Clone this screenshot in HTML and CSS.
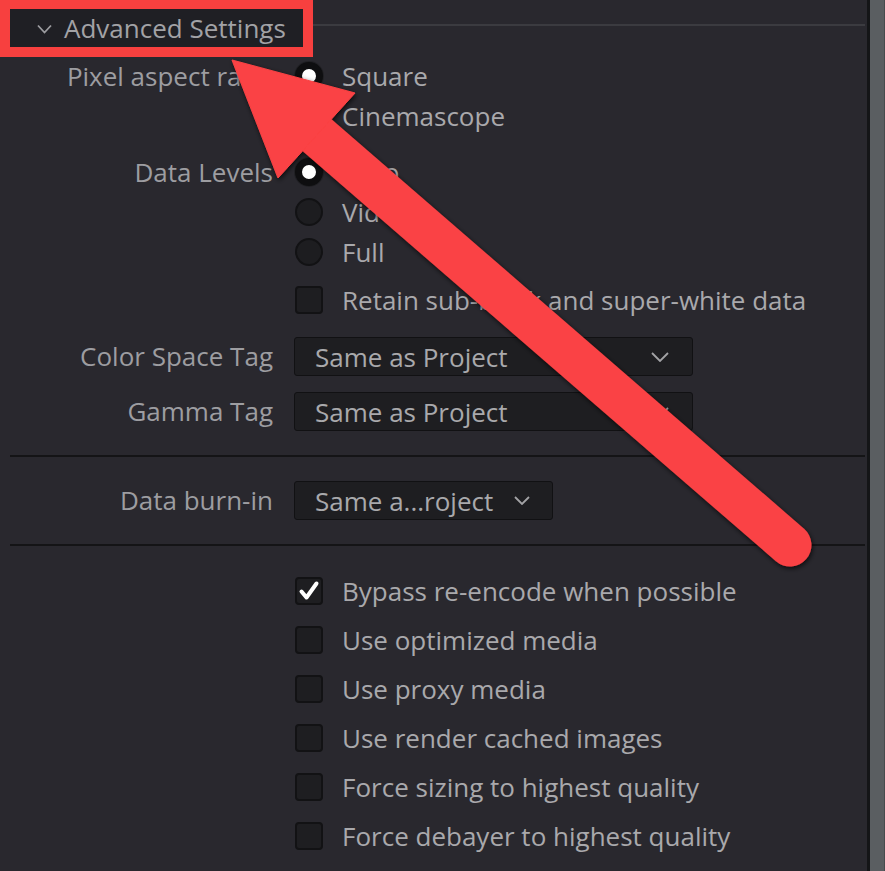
FILE: index.html
```html
<!DOCTYPE html>
<html lang="en">

<head>
    <meta charset="UTF-8">
    <meta name="viewport" content="width=device-width, initial-scale=1.0">
    <title>Advanced Settings</title>
    <link rel="stylesheet" href="styles.css">
</head>

<body>
    <div class="screen">
        <main class="panel">
            <!-- Section header -->
            <div class="head">
                <div class="head-box">
                    <svg class="head-chev" width="15" height="10" viewBox="0 0 15 10">
                        <polyline points="1,1.5 7.5,8.5 14,1.5" fill="none" stroke="#9c9ca0" stroke-width="1.8" />
                    </svg>
                    <span>Advanced Settings</span>
                </div>
                <div class="head-rule"></div>
            </div>

            <div class="field f-aspect">
                <div class="label">Pixel aspect ratio</div>
                <div class="opts">
                    <div class="opt"><span class="radio on"></span>Square</div>
                    <div class="opt"><span class="radio"></span>Cinemascope</div>
                </div>
            </div>

            <div class="field f-levels">
                <div class="label">Data Levels</div>
                <div class="opts">
                    <div class="opt"><span class="radio on"></span>Auto</div>
                    <div class="opt"><span class="radio"></span>Video</div>
                    <div class="opt"><span class="radio"></span>Full</div>
                    <div class="opt check-row retain"><span class="box"></span>Retain sub-black and super-white data</div>
                </div>
            </div>

            <div class="field f-color">
                <div class="label">Color Space Tag</div>
                <div class="select wide">
                    <span>Same as Project</span>
                    <svg width="18" height="10" viewBox="0 0 18 10"><polyline points="1,1 9,9 17,1" fill="none" stroke="#a3a3a6" stroke-width="1.8" /></svg>
                </div>
            </div>

            <div class="field f-gamma">
                <div class="label">Gamma Tag</div>
                <div class="select wide">
                    <span>Same as Project</span>
                    <svg width="18" height="10" viewBox="0 0 18 10"><polyline points="1,1 9,9 17,1" fill="none" stroke="#a3a3a6" stroke-width="1.8" /></svg>
                </div>
            </div>

            <div class="rule"></div>

            <div class="field f-burn">
                <div class="label">Data burn-in</div>
                <div class="select narrow">
                    <span>Same a...roject</span>
                    <svg width="16" height="9" viewBox="0 0 16 9"><polyline points="1,1 8,8 15,1" fill="none" stroke="#a3a3a6" stroke-width="1.8" /></svg>
                </div>
            </div>

            <div class="rule"></div>

            <div class="checks">
                <div class="opt check-row"><span class="box on">
                    <svg width="22" height="22" viewBox="0 0 22 22"><path d="M3.5 11.5 L8.5 17.5 L18.5 3.5" fill="none" stroke="#fff" stroke-width="4" stroke-linecap="round" stroke-linejoin="round" /></svg>
                </span>Bypass re-encode when possible</div>
                <div class="opt check-row"><span class="box"></span>Use optimized media</div>
                <div class="opt check-row"><span class="box"></span>Use proxy media</div>
                <div class="opt check-row"><span class="box"></span>Use render cached images</div>
                <div class="opt check-row"><span class="box"></span>Force sizing to highest quality</div>
                <div class="opt check-row"><span class="box"></span>Force debayer to highest quality</div>
            </div>
        </main>

        <!-- Scrollbar track -->
        <div class="scrollbar"></div>
    </div>

    <!-- Annotation arrow -->
    <svg class="annot" width="885" height="871" viewBox="0 0 885 871">
        <defs>
            <filter id="shade" x="-10%" y="-10%" width="120%" height="120%">
                <feDropShadow dx="1" dy="2" stdDeviation="2.5" flood-color="#000" flood-opacity="0.7" />
            </filter>
        </defs>
        <g filter="url(#shade)" fill="#fa4244" stroke="#fa4244">
            <line x1="318" y1="136" x2="790" y2="545" stroke-width="43" stroke-linecap="round" />
            <polygon points="232,60 278,178 355,93" stroke-width="1" stroke-linejoin="round" />
        </g>
    </svg>
</body>

</html>
```

FILE: styles.css
```css
body {
    margin: 0;
    padding: 0;
    background-color: #29282e;
    font-family: 'Open Sans', 'Noto Sans', sans-serif;
    font-size: 26px;
    color: #9d9da1;
    overflow: hidden;
}

.screen {
    display: flex;
    width: 885px;
    height: 871px;
}

.panel {
    width: 867px;
    flex: none;
}

.scrollbar {
    flex: 1;
    border-left: 3px solid #141517;
    border-right: 1px solid #474b4d;
    background-color: #5a5e61;
}

/* Header */

.head {
    display: flex;
    height: 57px;
}

.head-box {
    box-sizing: border-box;
    width: 313px;
    height: 57px;
    border: 10px solid #f7403f;
    border-top-width: 9px;
    background-color: #1f1f24;
    display: flex;
    align-items: center;
    padding-left: 27px;
    color: #a2a2a6;
}

.head-chev {
    margin-right: 12px;
    margin-top: 2px;
}

.head-rule {
    flex: 1;
    height: 2px;
    margin-top: 24px;
    margin-right: 2px;
    background-color: #3b3b40;
}

/* Fields */

.field {
    display: grid;
    grid-template-columns: 273px 1fr;
    column-gap: 21px;
    align-items: start;
}

.label {
    text-align: right;
    height: 40px;
    line-height: 40px;
    white-space: nowrap;
}

.f-aspect {
    margin-top: -1px;
}

.f-levels {
    margin-top: 16px;
}

.f-color {
    margin-top: 13px;
}

.f-gamma {
    margin-top: 16px;
}

.f-color .label,
.f-gamma .label,
.f-burn .label {
    height: 39px;
    line-height: 39px;
}

.f-burn {
    margin-top: 24px;
}

.opt {
    display: flex;
    align-items: center;
    height: 40px;
    color: #a9a9ac;
    white-space: nowrap;
}

.radio {
    box-sizing: border-box;
    width: 28px;
    height: 28px;
    margin-left: 1px;
    margin-right: 19px;
    border-radius: 50%;
    border: 2px solid #121214;
    background-color: #1d1d20;
    flex: none;
}

.radio.on {
    border: 7px solid #0e0e10;
    background-color: #fff;
    box-shadow: 0 0 0 1px #202024;
}

.check-row {
    height: 49px;
}

.retain {
    height: 48px;
    margin-top: 4px;
}

.box {
    box-sizing: border-box;
    width: 28px;
    height: 28px;
    margin-left: 1px;
    margin-right: 19px;
    border-radius: 4px;
    border: 2px solid #121214;
    background-color: #1e1e21;
    flex: none;
    display: flex;
    align-items: center;
    justify-content: center;
}

/* Dropdowns */

.select {
    box-sizing: border-box;
    height: 39px;
    display: flex;
    align-items: center;
    justify-content: space-between;
    padding: 0 23px 0 20px;
    border: 1px solid #111113;
    border-radius: 3px;
    background-color: #1e1e21;
    color: #a9a9ac;
}

.select.wide {
    width: 399px;
}

.select.narrow {
    width: 259px;
    padding-right: 22px;
}

.rule {
    height: 2px;
    margin: 24px 2px 0 10px;
    background-color: #141416;
}

.checks {
    margin-top: 20px;
    padding-left: 294px;
}

/* Annotation overlay */

.annot {
    position: absolute;
    top: 0;
    left: 0;
    pointer-events: none;
}
```
